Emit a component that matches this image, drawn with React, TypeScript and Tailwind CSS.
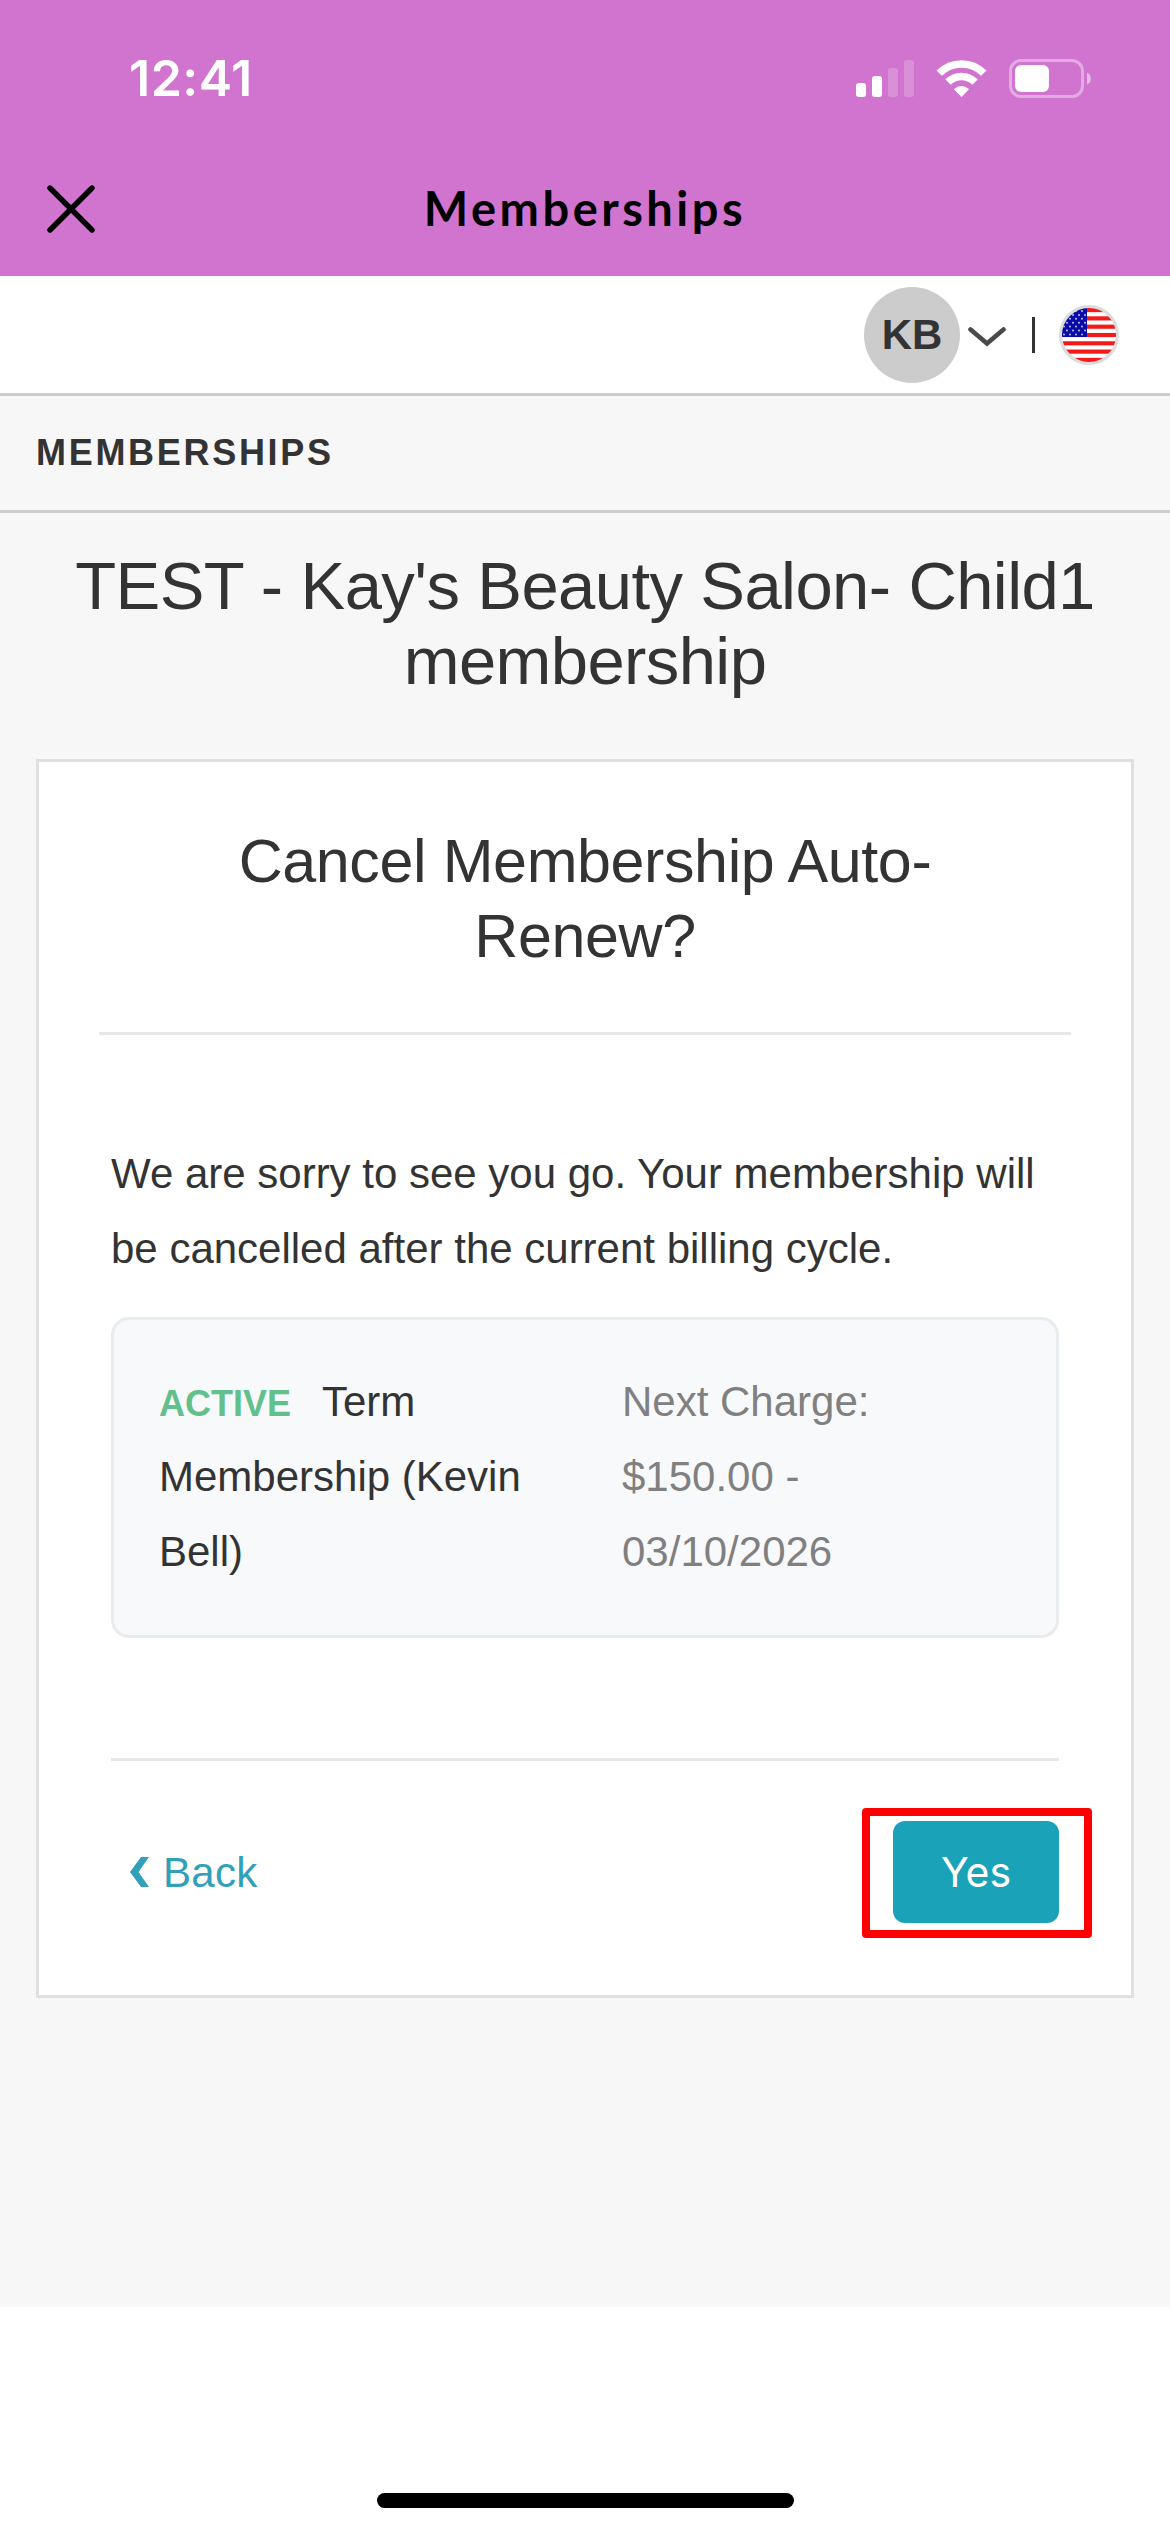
import type { ReactNode } from 'react';

// ─── Icons ────────────────────────────────────────────────────────────────────

function SignalIcon() {
    return (
        <svg width="58" height="37" viewBox="0 0 58 37" fill="#fff">
            <rect x="0" y="23" width="10" height="14" rx="3" />
            <rect x="16" y="16" width="10" height="21" rx="3" />
            <rect x="32" y="8" width="10" height="29" rx="3" opacity="0.2" />
            <rect x="48" y="0" width="10" height="37" rx="3" opacity="0.2" />
        </svg>
    );
}

function WifiIcon() {
    return (
        <svg width="51" height="37" viewBox="0 0 51 37" fill="none" stroke="#fff" strokeWidth="7.5">
            <path d="M3.2 13.2A31.4 31.4 0 0 1 47.8 13.2" />
            <path d="M12 22.2A18.6 18.6 0 0 1 39 22.2" />
            <path d="M19 29.3A9.6 9.6 0 0 1 32 29.3L25.5 36Z" fill="#fff" strokeWidth="1.6" strokeLinejoin="round" />
        </svg>
    );
}

function BatteryIcon() {
    return (
        <svg width="83" height="39" viewBox="0 0 83 39">
            <rect x="1.5" y="1.5" width="72" height="36" rx="10.5" fill="none" stroke="#fff" strokeOpacity="0.4" strokeWidth="3" />
            <rect x="6" y="6" width="34" height="27" rx="6" fill="#fff" />
            <path d="M78 13.5C83 15 83 24 78 25.5Z" fill="#fff" fillOpacity="0.5" />
        </svg>
    );
}

function CloseIcon() {
    return (
        <svg width="48" height="48" viewBox="0 0 48 48" fill="none" stroke="#000" strokeWidth="5.4" strokeLinecap="round">
            <path d="M3 3L45 45M45 3L3 45" />
        </svg>
    );
}

function UsFlag() {
    const reds = [0, 2, 4, 6, 8, 10, 12];
    const stars = [0, 1, 2, 3, 4, 5, 6].flatMap(r => [0, 1, 2, 3].map(c => ({ r, c })));

    return (
        <svg width="60" height="60" viewBox="0 0 60 60">
            <defs>
                <clipPath id="flag">
                    <circle cx="30" cy="30" r="27.5" />
                </clipPath>
            </defs>
            <g clipPath="url(#flag)">
                <rect width="60" height="60" fill="#fff" />
                {reds.map(i => <rect key={i} x="0" y={3 + i * 4.154} width="60" height="4.154" fill="#f21a1a" />)}
                <rect x="0" y="0" width="28" height="32" fill="#0a0aa8" />
                {stars.map(({ r, c }) => (
                    <circle key={`${r}-${c}`} cx={(r % 2 ? 8 : 5) + c * 6} cy={6 + r * 3.9} r="1" fill="#b9c4f2" />
                ))}
            </g>
            <circle cx="30" cy="30" r="28.5" fill="none" stroke="#dcdcdc" strokeWidth="3" />
        </svg>
    );
}

// ─── Header ───────────────────────────────────────────────────────────────────

function AppHeader() {
    return (
        <header className="h-[276px] bg-[#d174d0]">
            <div className="h-[156px] pl-[129px] pr-[78px] flex items-center justify-between">
                <span className="font-['Inter',sans-serif] text-[50px] leading-[50px] font-semibold tracking-[0.5px] text-white">12:41</span>
                <div className="flex items-center">
                    <SignalIcon />
                    <div className="ml-[22px] mr-[22px]"><WifiIcon /></div>
                    <BatteryIcon />
                </div>
            </div>
            <div className="h-[106px] px-[47px] grid grid-cols-[48px_1fr_48px] items-center">
                <CloseIcon />
                <h1 className="pb-[3px] text-center font-['Lato',sans-serif] text-[47px] leading-[56px] font-bold tracking-[3.5px] text-black">Memberships</h1>
            </div>
        </header>
    );
}

function UserBar() {
    return (
        <div className="h-[120px] pr-[51px] flex items-center justify-end border-b-[3px] border-[#ccc] bg-white">
            <div className="w-24 h-24 rounded-full bg-[#ccc] flex items-center justify-center text-[42px] font-bold">KB</div>
            <svg className="ml-2 mt-1" width="38" height="20" viewBox="0 0 38 20" fill="none" stroke="#4a4a4a" strokeWidth="4.6" strokeLinecap="round">
                <path d="M2.5 2.5L19 16.5L35.5 2.5" />
            </svg>
            <div className="ml-[26px] mr-6 w-[3px] h-9 bg-[#333]" />
            <UsFlag />
        </div>
    );
}

function Column({ className, children }: { className: string; children: ReactNode }) {
    return <div className={`leading-[75px] ${className}`}>{children}</div>;
}

// ─── Screen ───────────────────────────────────────────────────────────────────

export default function App() {
    return (
        <div className="w-[1170px] h-[2532px] overflow-hidden bg-white flex flex-col font-['Liberation_Sans',Arial,sans-serif] text-[#333]">
            <AppHeader />
            <UserBar />

            <main className="h-[1911px] bg-[#f7f7f7]">
                <div className="h-[117px] px-9 flex items-center border-b-[3px] border-[#ccc] text-[36px] font-bold tracking-[2.7px]">
                    MEMBERSHIPS
                </div>

                <h2 className="pt-[35px] text-center text-[67px] leading-[75px] tracking-[-0.6px]">
                    TEST - Kay's Beauty Salon- Child1<br />membership
                </h2>

                <section className="mx-9 mt-[61px] h-[1239px] border-[3px] border-[#e0e0e0] bg-white">
                    <h3 className="mx-[60px] pt-[62px] pb-[58px] border-b-[3px] border-[#e7e7e7] text-center text-[61px] leading-[75px] tracking-[-0.4px]">
                        Cancel Membership Auto-<br />Renew?
                    </h3>

                    <div className="px-[72px] pt-[101px] text-[42px]">
                        <p className="leading-[75px] whitespace-nowrap">
                            We are sorry to see you go. Your membership will<br />be cancelled after the current billing cycle.
                        </p>

                        <div className="mt-[31px] h-[321px] px-[45px] pt-[44px] flex rounded-[18px] border-[3px] border-[#e9ecef] bg-[#f8f9fb]">
                            <Column className="w-[463px]">
                                <span className="mr-[31px] text-[36px] leading-none font-bold text-[#62c08a]">ACTIVE</span>Term
                                <br />Membership (Kevin<br />Bell)
                            </Column>
                            <Column className="text-[#808080]">
                                Next Charge:<br />$150.00 -<br />03/10/2026
                            </Column>
                        </div>

                        <div className="mt-[120px] pt-[60px] flex items-center justify-between border-t-[3px] border-[#e7e7e7]">
                            <a className="pl-[19px] flex items-center tracking-[0.3px] text-[#32a0b8]">
                                <svg className="mr-[14px]" width="19" height="30" viewBox="0 0 19 30" fill="#32a0b8">
                                    <path d="M11 0H19L8.5 15L19 30H11L0 15Z" />
                                </svg>
                                Back
                            </a>
                            <button className="relative w-[166px] h-[102px] pt-0.5 rounded-xl bg-[#1aa2b8] font-['Inter',sans-serif] text-[41px] text-white">
                                Yes
                                <span className="absolute -left-[31px] -top-[13px] w-[230px] h-[130px] border-8 border-[#f00] rounded-[4px]" />
                            </button>
                        </div>
                    </div>
                </section>
            </main>

            {/* home indicator */}
            <footer className="flex-1 pb-6 flex items-end justify-center">
                <div className="w-[417px] h-[15px] rounded-full bg-black" />
            </footer>
        </div>
    );
}
